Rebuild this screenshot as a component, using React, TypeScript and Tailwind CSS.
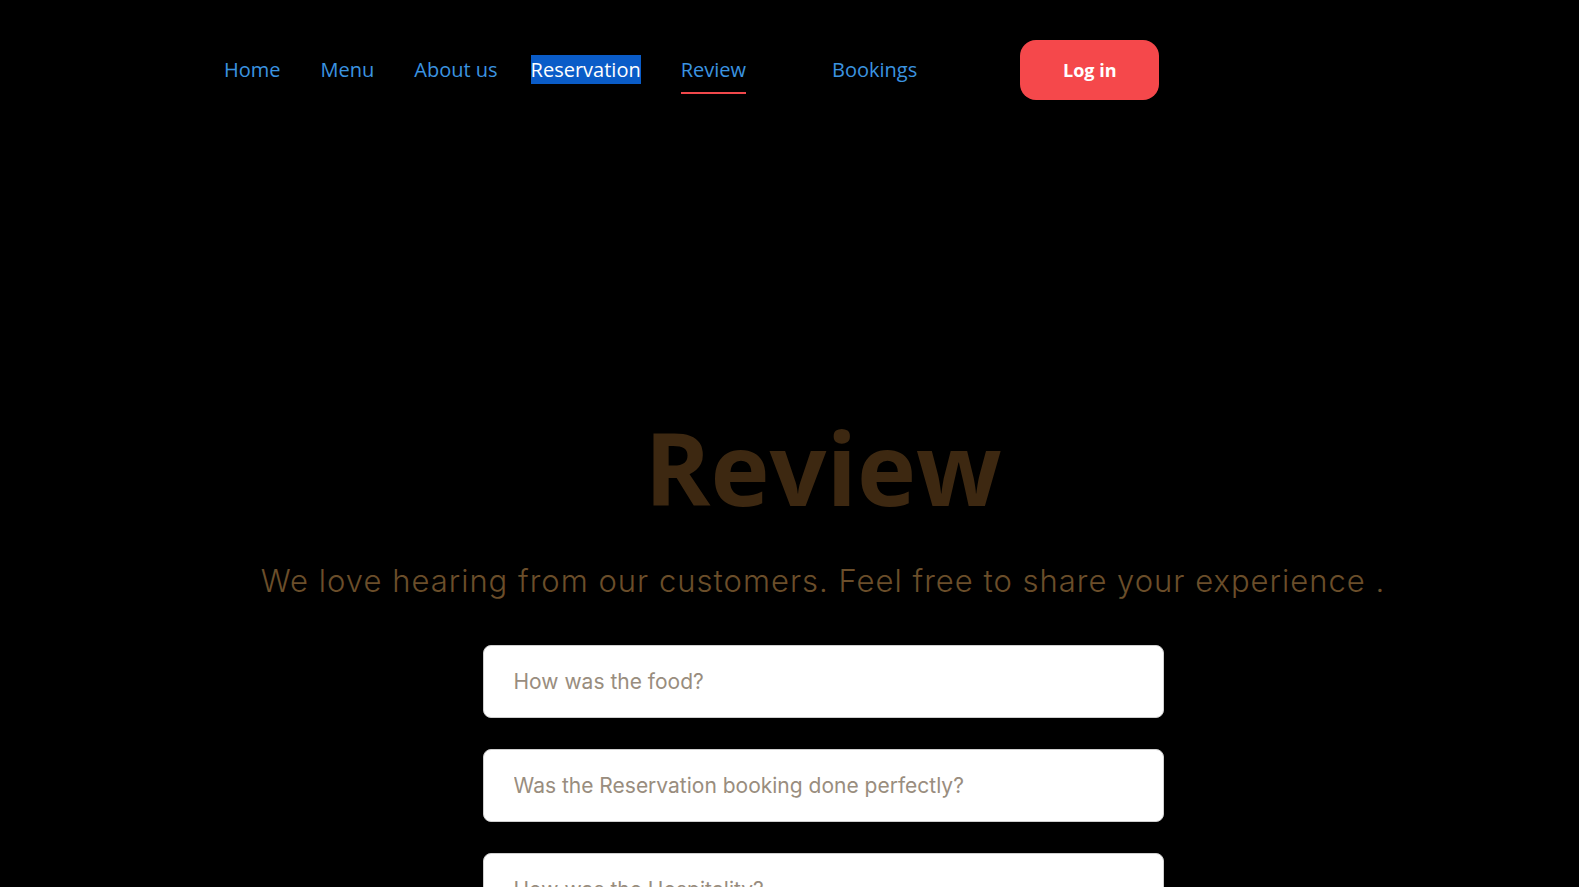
import React from 'react';

const NAV = ['Home', 'Menu', 'About us', 'Reservation', 'Review'];

const QUESTIONS = [
  'How was the food?',
  'Was the Reservation booking done perfectly?',
  'How was the Hospitality?',
];

export default function App() {
  return (
    <div className="min-h-screen bg-black overflow-hidden" style={{ height: 887 }}>
      {/* Header */}
      <header className="flex items-center h-[140px] pl-[224px] font-['Open_Sans',sans-serif] text-[20px]">
        <nav className="flex items-center gap-[40px] -mt-[1px]">
          {NAV.map((item) => {
            if (item === 'Reservation') {
              return (
                <span key={item} className="-ml-[7px] bg-[#0a5cc8] text-white leading-[29px]">
                  {item}
                </span>
              );
            }
            if (item === 'Review') {
              return (
                <span key={item} className="relative text-[#3b94e0] leading-[29px]">
                  {item}
                  <span className="absolute left-0 right-0 top-[37px] h-[2px] bg-[#f0484b]" />
                </span>
              );
            }
            return (
              <a key={item} href="#" className="text-[#3b94e0] leading-[29px]">
                {item}
              </a>
            );
          })}
        </nav>
        <a href="#" className="ml-[86px] -mt-[1px] text-[#3b94e0] leading-[29px]">
          Bookings
        </a>
        <button className="ml-[103px] w-[139px] h-[60px] rounded-[16px] bg-[#f5484b] text-white font-bold text-[18px]">
          Log in
        </button>
      </header>

      {/* Main */}
      <main className="flex flex-col items-center pl-[67px] pt-[277px]">
        <h1 className="font-['Open_Sans',sans-serif] font-bold text-[100px] leading-[1] text-[#3d2811]">
          Review
        </h1>
        <p className="mt-[41px] font-['Inter',sans-serif] font-light text-[31px] tracking-[1px] text-[#6b4e2a] whitespace-nowrap">
          We love hearing from our customers. Feel free to share your experience .
        </p>
        <form className="mt-[40px] flex flex-col gap-[31px] w-[681px]">
          {QUESTIONS.map((q) => (
            <input
              key={q}
              placeholder={q}
              className="h-[73px] shrink-0 rounded-[8px] border border-[#cfcfcf] bg-white px-[30px] font-['Inter',sans-serif] text-[21px] text-[#998d7e] placeholder:text-[#998d7e] outline-none"
            />
          ))}
        </form>
      </main>
    </div>
  );
}
